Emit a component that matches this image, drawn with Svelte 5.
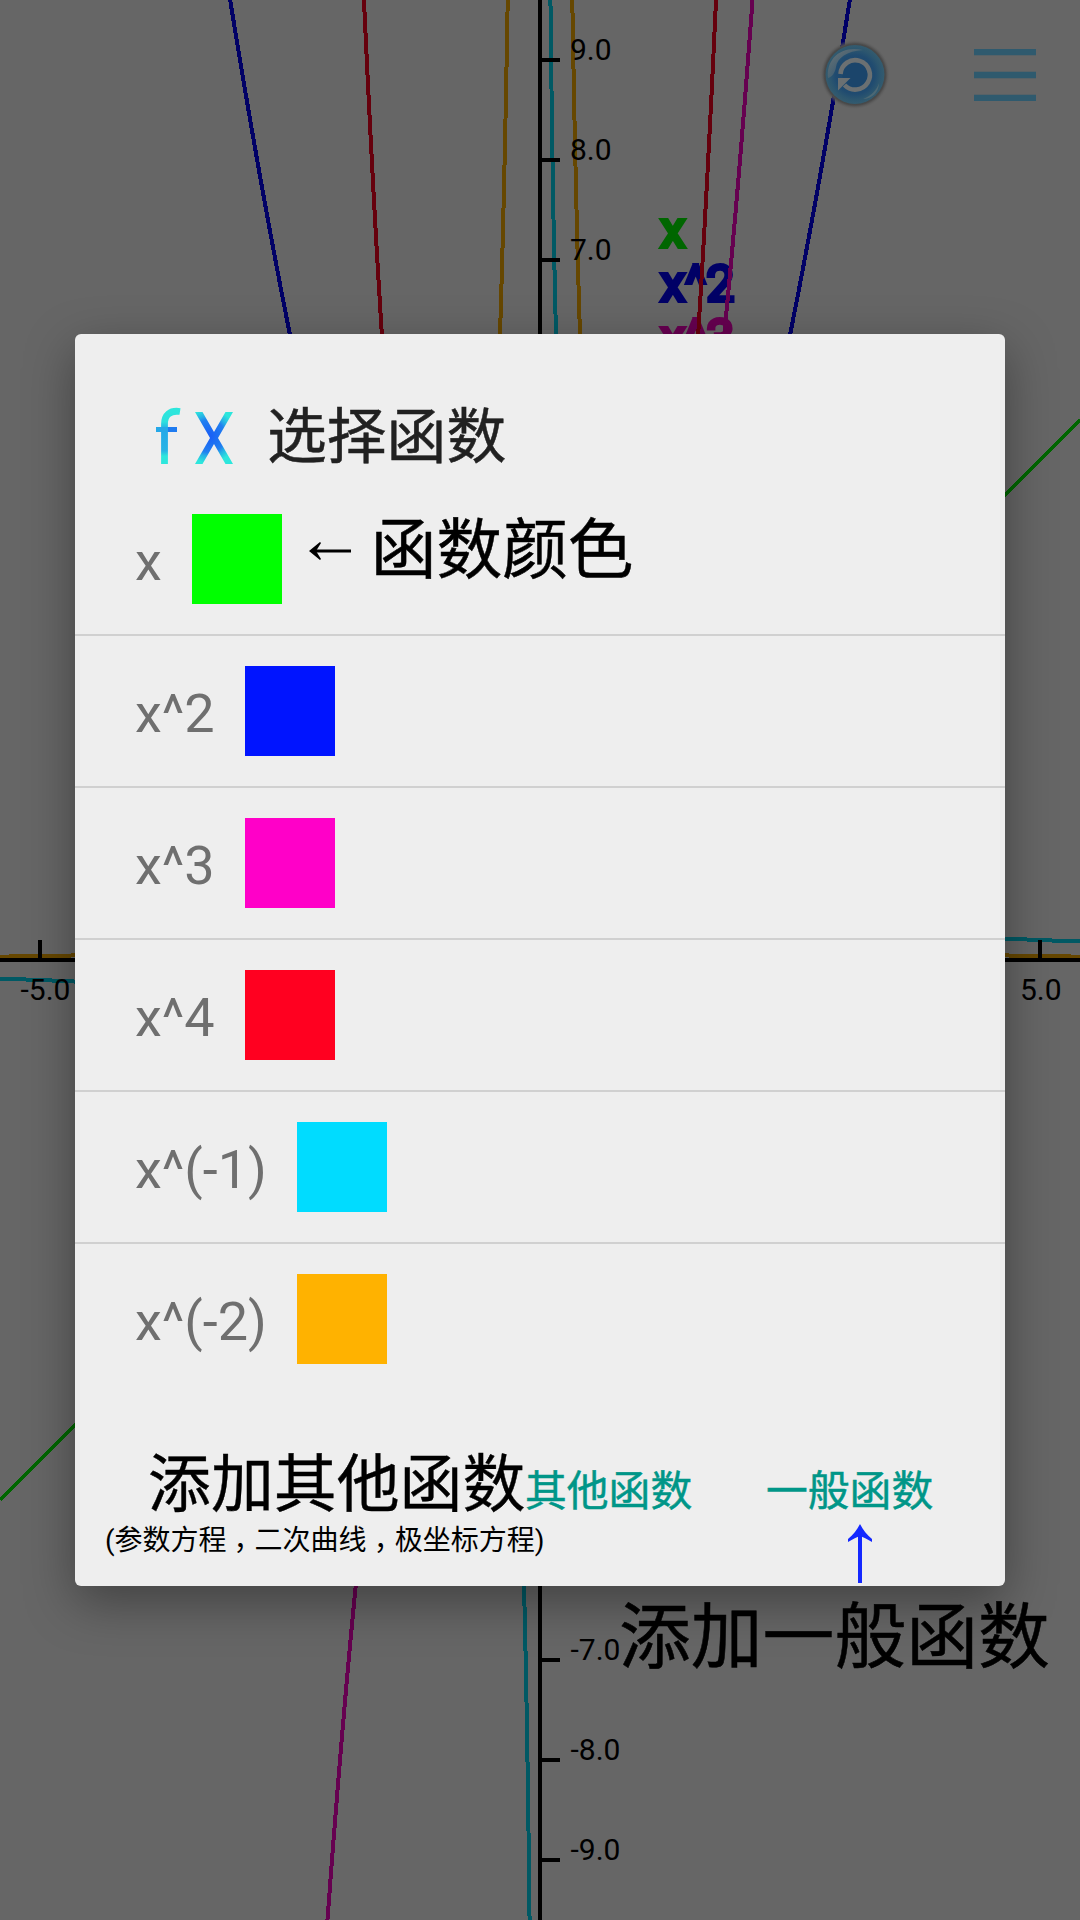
<script>
  const U = 100;
  const CX = 540;
  const CY = 960;

  // Samples f over [from, to] and returns a polyline path in screen pixels.
  function trace(f, from, to, step = 0.01) {
    let d = '';
    for (let x = from; x <= to + 1e-9; x += step) {
      const px = (CX + x * U).toFixed(1);
      const py = (CY - f(x) * U).toFixed(1);
      d += (d ? 'L' : 'M') + px + ' ' + py;
    }
    return d;
  }

  const curves = [
    { color: '#006600', d: trace((x) => x, -5.4, 5.4, 0.1) },
    { color: '#000066', d: trace((x) => x ** 2, -3.2, 3.2) },
    { color: '#660050', d: trace((x) => x ** 3, -2.2, 2.2) },
    { color: '#66000d', d: trace((x) => x ** 4, -1.8, 1.8) },
    { color: '#005964', d: trace((x) => 1 / x, 0.1, 5.4) + trace((x) => 1 / x, -5.4, -0.1) },
    { color: '#664700', d: trace((x) => x ** -2, 0.3, 5.4) + trace((x) => x ** -2, -5.4, -0.3) }
  ];

  const ticks = [-9, -8, -7, 7, 8, 9];

  const legend = [
    { name: 'x', color: '#006600', y: 247 },
    { name: 'x^2', color: '#000066', y: 301 },
    { name: 'x^3', color: '#660050', y: 355 }
  ];

  const functions = [
    { name: 'x', color: '#00ff00', note: '函数颜色' },
    { name: 'x^2', color: '#0014ff' },
    { name: 'x^3', color: '#ff00c8' },
    { name: 'x^4', color: '#ff0020' },
    { name: 'x^(-1)', color: '#00dcff' },
    { name: 'x^(-2)', color: '#ffb200' }
  ];
</script>

<main class="screen">
  <svg class="plot" viewBox="0 0 1080 1920" width="1080" height="1920">
    <g class="legend">
      {#each legend as item}
        <text x="660.5" y={item.y} fill={item.color} stroke={item.color}>{item.name}</text>
      {/each}
    </g>
    <g class="curves" shape-rendering="crispEdges">
      {#each curves as c}
        <path d={c.d} stroke={c.color} />
      {/each}
    </g>
    <g class="axes" shape-rendering="crispEdges">
      <path d="M540 0V1920M0 960H1080M40 940V960M1040 940V960" />
      {#each ticks as t}
        <path d="M540 {CY - t * U}H560" />
      {/each}
    </g>
    <g class="labels">
      {#each ticks as t}
        <text x={t < 0 ? 570.5 : 570} y={CY - t * U}>{t.toFixed(1)}</text>
      {/each}
      <text x="20.5" y="1000">-5.0</text>
      <text x="1020" y="1000">5.0</text>
    </g>
  </svg>

  <header class="toolbar">
    <svg class="reset" viewBox="0 0 76 76" width="76" height="76">
      <defs>
        <radialGradient id="halo">
          <stop offset="0.78" stop-color="#3c3c3c" />
          <stop offset="0.88" stop-color="#4c4c4c" />
          <stop offset="1" stop-color="#666" stop-opacity="0" />
        </radialGradient>
        <radialGradient id="ball">
          <stop offset="0" stop-color="#1c456b" />
          <stop offset="0.66" stop-color="#204b70" />
          <stop offset="0.85" stop-color="#2c566f" />
          <stop offset="1" stop-color="#345b6e" />
        </radialGradient>
        <linearGradient id="gloss" x1="0" y1="0" x2="1" y2="1">
          <stop offset="0" stop-color="#6c7377" />
          <stop offset="1" stop-color="#4b6470" stop-opacity="0.2" />
        </linearGradient>
      </defs>
      <circle cx="38" cy="37.5" r="35" fill="url(#halo)" />
      <circle cx="38" cy="37.5" r="29.5" fill="url(#ball)" />
      <path d="M11 41C9 22 24 8 46 13C30 14 20 21 19 30C18 36 15 40 11 41Z" fill="url(#gloss)" />
      <path d="M46 62C54 59 60 53 62 46C62 55 55 62 46 62Z" fill="#4c6874" />
      <circle cx="38" cy="37.5" r="12.5" fill="#1b456b" />
      <path d="M23.5 37A14.7 14.7 0 1 1 27.5 48" fill="none" stroke="#6b7072" stroke-width="4.6" />
      <path d="M21 41H33.5L21 53.5Z" fill="#6b7072" />
    </svg>
    <svg class="menu" viewBox="0 0 62 52" width="62" height="52">
      <path d="M0 3H62M0 26H62M0 49H62" stroke="#2f5a6e" stroke-width="6.4" />
    </svg>
  </header>

  <section class="dialog">
    <h1 class="title">
      <svg class="fx" viewBox="0 0 80 60" width="80" height="60">
        <defs>
          <linearGradient id="fg" x1="0" y1="0" x2="0" y2="1">
            <stop offset="0" stop-color="#2de6dc" />
            <stop offset="0.2" stop-color="#2de0de" />
            <stop offset="0.35" stop-color="#24a9e8" />
            <stop offset="0.75" stop-color="#28b4e5" />
            <stop offset="0.85" stop-color="#2de6dc" />
          </linearGradient>
          <radialGradient id="xg" gradientUnits="userSpaceOnUse" cx="53" cy="29" r="27">
            <stop offset="0.1" stop-color="#1a62f5" />
            <stop offset="0.6" stop-color="#2180f0" />
            <stop offset="0.75" stop-color="#26b0e6" />
            <stop offset="1" stop-color="#2de6dc" />
          </radialGradient>
        </defs>
        <path d="M24 4.5C14 3 8.5 8 8.5 17V57" fill="none" stroke="url(#fg)" stroke-width="6.8" />
        <path d="M0 22.5H12" stroke="#25a8e8" stroke-width="5" />
        <path d="M12 22.5H21" stroke="#1f7bf0" stroke-width="5" />
        <path d="M39 5H46.5L58 25L69.5 5H77L62 31L77 57H69.5L58 37L46.5 57H39L54 31Z" fill="url(#xg)" />
      </svg>
      <span>选择函数</span>
    </h1>

    <ul class="list">
      {#each functions as fn}
        <li>
          <span class="name">{fn.name}</span>
          <i class="swatch" style:background={fn.color}></i>
          {#if fn.note}
            <span class="note">
              <svg viewBox="0 0 42 20" width="42" height="20">
                <path d="M3 10H42" stroke="#000" stroke-width="3" fill="none" />
                <path d="M0 10L11 1L12 2L7 10L12 18L11 19Z" />
              </svg>
              {fn.note}
            </span>
          {/if}
        </li>
      {/each}
    </ul>

    <footer class="actions">
      <div class="row">
        <span class="hint">添加其他函数</span>
        <span class="button">其他函数</span>
        <span class="button general">一般函数</span>
      </div>
      <p class="detail">(参数方程<b>，</b>二次曲线<b>，</b>极坐标方程)</p>
    </footer>
    <svg class="up" viewBox="0 0 24 59" width="24" height="59">
      <path d="M12 6V59" stroke="#1428ff" stroke-width="4" />
      <path d="M12 0C15 6 19 11 24 15V18C19 15 15 13 12 12C9 13 5 15 0 18V15C5 11 9 6 12 0Z" fill="#1428ff" />
    </svg>
  </section>

  <p class="caption">添加一般函数</p>
</main>

<style>
  :global(body) {
    margin: 0;
    background: #666;
  }

  .screen {
    position: relative;
    box-sizing: border-box;
    width: 1080px;
    height: 1920px;
    padding: 334px 75px 0;
    overflow: hidden;
    background: #666;
    font-family: Roboto, 'Noto Sans CJK SC', sans-serif;
  }

  .plot {
    position: absolute;
    inset: 0;
  }

  .curves path {
    fill: none;
    stroke-width: 4;
  }

  .axes path {
    stroke: #000;
    stroke-width: 4;
  }

  .labels {
    font-size: 30px;
  }

  .legend {
    font-size: 50px;
    stroke-width: 4px;
  }

  .toolbar {
    position: absolute;
    top: 37px;
    right: 44px;
    display: flex;
    align-items: center;
    gap: 81px;
  }

  .dialog {
    position: relative;
    box-sizing: border-box;
    height: 1252px;
    border-radius: 6px;
    background: #eee;
    box-shadow: 0 16px 50px rgba(0, 0, 0, 0.36);
  }

  .title {
    display: flex;
    align-items: center;
    gap: 31px;
    box-sizing: border-box;
    height: 150px;
    margin: 0;
    padding: 57px 0 0 81px;
    color: #212121;
    font-size: 59.8px;
    font-weight: 400;
    line-height: 80px;
    -webkit-text-stroke: 0.5px currentColor;
  }

  .fx {
    margin-top: -2px;
  }

  .list {
    margin: 0;
    padding: 0;
    list-style: none;
  }

  .list li {
    display: flex;
    align-items: center;
    box-sizing: border-box;
    height: 152px;
    padding: 0 0 0 60px;
    border-bottom: 2px solid #d0d0d0;
  }

  .list li:last-child {
    border-bottom-color: transparent;
  }

  .name {
    padding-top: 5px;
    color: #6f6f6f;
    font-size: 54px;
    line-height: 64px;
  }

  .swatch {
    width: 90px;
    height: 90px;
    margin-left: 30px;
  }

  .note {
    display: flex;
    align-items: center;
    gap: 20px;
    margin: -16px 0 0 27px;
    color: #000;
    font-size: 65.7px;
    line-height: 80px;
    -webkit-text-stroke: 0.5px currentColor;
  }

  .actions {
    padding: 49px 0 0 30px;
    color: #000;
  }

  .row {
    display: flex;
    align-items: baseline;
    padding-left: 43px;
    line-height: 80px;
  }

  .hint {
    width: 378px;
    font-size: 62.9px;
    -webkit-text-stroke: 0.4px currentColor;
  }

  .button {
    width: 168px;
    margin-left: -1px;
    color: #009688;
    font-size: 41.8px;
    -webkit-text-stroke: 0.5px currentColor;
  }

  .general {
    margin-left: 73px;
  }

  .detail {
    margin: -9px 0 0;
    font-size: 28px;
    line-height: 36px;
    white-space: nowrap;
  }

  .detail b {
    display: inline-block;
    padding: 0 7px;
    font-weight: 400;
    font-feature-settings: 'halt';
  }

  .up {
    position: absolute;
    right: 133px;
    bottom: 3px;
  }

  .caption {
    position: relative;
    width: max-content;
    margin: 2px 0 0 544px;
    color: #000;
    font-size: 71.8px;
    line-height: 100px;
    -webkit-text-stroke: 0.5px currentColor;
  }
</style>
